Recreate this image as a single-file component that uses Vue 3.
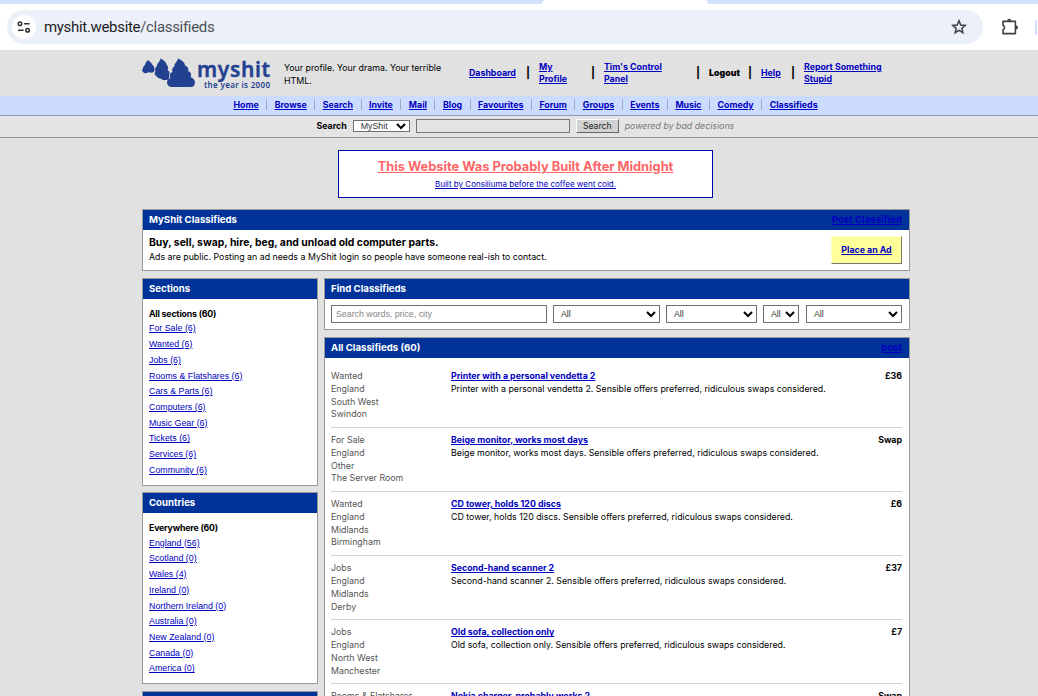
<template>
  <div class="window">
    <!-- Browser bar -->
    <div class="tab-strip"><div class="active-tab"></div></div>
    <div class="toolbar">
      <div class="omnibox">
        <span class="site-info">
          <svg width="14" height="12" viewBox="0 0 14 12" fill="none" stroke="#303236" stroke-width="1.5">
            <circle cx="3" cy="2.7" r="1.8" />
            <path d="M7 2.7h5.6M1 9.2h5.6" />
            <circle cx="10.6" cy="9.2" r="1.8" />
          </svg>
        </span>
        <span class="url">myshit.website<span class="path">/classifieds</span></span>
        <svg class="star" width="16" height="16" viewBox="0 0 16 16" fill="none" stroke="#3c4043" stroke-width="1.5">
          <path d="M8 1.8l1.75 4.2 4.5.4-3.4 2.95 1 4.4L8 11.4l-3.85 2.35 1-4.4L1.75 6.4l4.5-.4z" />
        </svg>
      </div>
      <svg class="puzzle" width="18" height="18" viewBox="0 0 18 18" fill="none" stroke="#3c4043" stroke-width="1.6">
        <path d="M2 3.4h12.4v12.2H2v-3.8a2.5 2.5 0 0 0 0-4.6z" stroke-linejoin="round" />
        <path d="M6.2 2.8a2 2 0 0 1 4 0zM15 7.6a2 2 0 0 1 0 4z" fill="#3c4043" stroke="none" />
      </svg>
      <span class="toolbar-divider"></span>
    </div>

    <!-- Site header -->
    <header class="site-header">
      <div class="wrap header-row">
        <svg class="logo" width="130" height="38" viewBox="0 0 130 38">
          <g fill="#234191">
            <path d="M6 5c2 2 4 3 4.500 5 1.500 1 2 2 1.500 3.500 1.500 1 0 3.500-1.500 4-2 .5-3-.5-4.500 0-2 1.500-4 .5-5-.5-1.500-1-1-2.500 0-3.500 0-2 1-3 2-3.500 0-2 1.500-3 3-5z" />
            <path d="M18.500 3.500c3 1.500 6 4 6 6 2 2 2 4 1 5.500 2.500 1.500 2.500 3.500 1.500 5 1 3-1 5.500-3.500 5-2 .5-4-.5-5-1.500-2 0-3.500-1-4-2.500-2-.5-2.500-3-1-4.500-1-2.500 0-4.500 1.500-5.500 0-3 3-4 3.500-7.500z" />
            <path d="M36 3.500c3.500 1.500 7 4 7 7 3 1 4 3.500 3 5.500 3 1 4 4 2.500 6 3 1 4.500 3.500 4.500 5.500 0 3-2 4.500-4.500 4.500H30c-3 0-5-2-5-4.500s1.500-4 3.500-4.500c-1.500-3 0-5.500 2-6-1-3 0-4.500 2-6-.5-3 3-4 3.500-7.500z" />
          </g>
          <text x="55" y="21.500" class="logo-name" textLength="73">myshit</text>
          <text x="62" y="33" class="logo-tag" textLength="66">the year is 2000</text>
        </svg>
        <div class="tagline">Your profile. Your drama. Your terrible HTML.</div>
        <nav class="account">
          <a class="dash">Dashboard</a><i>|</i>
          <a class="prof">My Profile</a><i>|</i>
          <a class="control">Tim's Control Panel</a><i>|</i>
          <b class="logout">Logout</b><i>|</i>
          <a class="help">Help</a><i>|</i>
          <a class="report">Report Something Stupid</a>
        </nav>
      </div>
    </header>

    <nav class="main-nav">
      <span v-for="item in navItems" :key="item" class="nav-item"><a>{{ item }}</a></span>
    </nav>

    <div class="search-bar">
      <b>Search</b>
      <span class="select search-select">MyShit<svg class="chev" viewBox="0 0 10 7"><path d="M1 1l4 4 4-4" /></svg></span>
      <span class="search-input"></span>
      <button class="search-btn">Search</button>
      <em>powered by bad decisions</em>
    </div>

    <!-- Page -->
    <main class="wrap page">
      <div class="banner">
        <a class="banner-title">This Website Was Probably Built After Midnight</a>
        <a class="banner-sub">Built by Consiliuma before the coffee went cold.</a>
      </div>

      <section class="panel intro">
        <h2>MyShit Classifieds <a>Post Classified</a></h2>
        <div class="intro-body">
          <div>
            <h3>Buy, sell, swap, hire, beg, and unload old computer parts.</h3>
            <p>Ads are public. Posting an ad needs a MyShit login so people have someone real-ish to contact.</p>
          </div>
          <a class="place-ad">Place an Ad</a>
        </div>
      </section>

      <div class="columns">
        <aside>
          <section class="panel side-panel" v-for="box in sideBoxes" :key="box.title">
            <h2>{{ box.title }}</h2>
            <ul>
              <li class="current">{{ box.current }}</li>
              <li v-for="link in box.links" :key="link"><a>{{ link }}</a></li>
            </ul>
          </section>
        </aside>

        <div class="content">
          <section class="panel find">
            <h2>Find Classifieds</h2>
            <div class="filters">
              <span class="text-input">Search words, price, city</span>
              <span v-for="n in 4" :key="n" class="select">All<svg class="chev" viewBox="0 0 10 7"><path d="M1 1l4 4 4-4" /></svg></span>
            </div>
          </section>

          <section class="panel listing">
            <h2>All Classifieds (60) <a>post</a></h2>
            <div class="ads">
              <article v-for="(ad, index) in ads" :key="index" class="ad">
                <div class="meta"><div v-for="line in ad.meta" :key="line">{{ line }}</div></div>
                <div class="text">
                  <a>{{ ad.title }}</a>
                  <p>{{ ad.title }}. Sensible offers preferred, ridiculous swaps considered.</p>
                </div>
                <b class="price">{{ ad.price }}</b>
              </article>
            </div>
          </section>
        </div>
      </div>
    </main>
  </div>
</template>

<script setup>
const navItems = [
  'Home', 'Browse', 'Search', 'Invite', 'Mail', 'Blog', 'Favourites',
  'Forum', 'Groups', 'Events', 'Music', 'Comedy', 'Classifieds'
]

const sideBoxes = [
  {
    title: 'Sections',
    current: 'All sections (60)',
    links: [
      'For Sale (6)', 'Wanted (6)', 'Jobs (6)', 'Rooms & Flatshares (6)', 'Cars & Parts (6)',
      'Computers (6)', 'Music Gear (6)', 'Tickets (6)', 'Services (6)', 'Community (6)'
    ]
  },
  {
    title: 'Countries',
    current: 'Everywhere (60)',
    links: [
      'England (56)', 'Scotland (0)', 'Wales (4)', 'Ireland (0)', 'Northern Ireland (0)',
      'Australia (0)', 'New Zealand (0)', 'Canada (0)', 'America (0)'
    ]
  },
  { title: '', current: '', links: [] }
]

const ads = [
  { title: 'Printer with a personal vendetta 2', price: '£36', meta: ['Wanted', 'England', 'South West', 'Swindon'] },
  { title: 'Beige monitor, works most days', price: 'Swap', meta: ['For Sale', 'England', 'Other', 'The Server Room'] },
  { title: 'CD tower, holds 120 discs', price: '£6', meta: ['Wanted', 'England', 'Midlands', 'Birmingham'] },
  { title: 'Second-hand scanner 2', price: '£37', meta: ['Jobs', 'England', 'Midlands', 'Derby'] },
  { title: 'Old sofa, collection only', price: '£7', meta: ['Jobs', 'England', 'North West', 'Manchester'] },
  { title: 'Nokia charger, probably works 2', price: 'Swap', meta: ['Rooms & Flatshares'] }
]
</script>

<style>
body {
  margin: 0;
  overflow: hidden;
}
</style>

<style scoped>
* {
  box-sizing: border-box;
}

.window {
  height: 696px;
  overflow: hidden;
  background: #e1e1e1;
  color: #000;
  font-family: Inter, "Liberation Sans", sans-serif;
  font-size: 8.81px;
  line-height: 12.75px;
}

a {
  color: #0000c0;
  text-decoration: underline;
}

h2, h3, p, ul {
  margin: 0;
  padding: 0;
}

.tab-strip {
  height: 4px;
  background: #d3e3fd;
}

.active-tab {
  width: 166px;
  height: 4px;
  margin-left: 542px;
  background: #fff;
  border-radius: 4px 4px 0 0;
}

.toolbar {
  height: 46px;
  background: #fff;
  display: flex;
  align-items: center;
  padding-left: 7px;
}

.omnibox {
  width: 976px;
  height: 34px;
  border-radius: 17px;
  background: #ebf0f9;
  display: flex;
  align-items: center;
  padding: 0 16px 0 5px;
}

.site-info {
  width: 24px;
  height: 24px;
  border-radius: 50%;
  background: #fff;
  display: flex;
  align-items: center;
  justify-content: center;
  margin-right: 8px;
}

.url {
  font-family: Roboto, Inter, sans-serif;
  font-size: 15px;
  line-height: 20px;
  letter-spacing: -0.32px;
  color: #1f1f1f;
}

.path {
  color: #4d5156;
}

.star {
  margin-left: auto;
}

.puzzle {
  margin-left: 18px;
}

.toolbar-divider {
  width: 2px;
  height: 15px;
  margin-left: 16px;
  background: #d3e3fd;
}

.wrap {
  width: 768px;
  margin: 0 auto 0 142px;
}

.site-header {
  height: 46px;
}

.header-row {
  display: flex;
  align-items: center;
  height: 46px;
}

.logo {
  margin-top: 1px;
}

.logo-name {
  font-family: "Noto Sans", sans-serif;
  font-size: 21px;
  font-weight: 600;
  fill: #234191;
  stroke: #234191;
  stroke-width: 0.4;
}

.logo-tag {
  font-family: "Noto Sans", sans-serif;
  font-size: 8px;
  font-weight: 600;
  fill: #234191;
}

.tagline {
  width: 165px;
  margin-left: 12px;
  margin-top: 3px;
}

.account {
  display: flex;
  align-items: center;
  margin-left: 20px;
  font-weight: 700;
  line-height: 12px;
}

.account i {
  width: 22px;
  font-style: normal;
  font-size: 11px;
  text-align: center;
}

.dash {
  width: 48px;
}

.prof {
  width: 43px;
}

.control {
  width: 83px;
}

.logout {
  width: 30px;
}

.help {
  width: 21px;
}

.report {
  width: 90px;
}

.main-nav {
  height: 20px;
  background: #ccdcff;
  border-bottom: 1px solid #8f9bb8;
  display: flex;
  justify-content: center;
  align-items: center;
  padding-left: 13px;
  padding-bottom: 2px;
}

.nav-item {
  font-weight: 700;
  padding: 0 7.5px;
  line-height: 11px;
}

.nav-item + .nav-item {
  border-left: 1px solid #a4a9b5;
}

.search-bar {
  height: 22px;
  border-bottom: 1px solid #999;
  background: #e4e4e4;
  display: flex;
  align-items: center;
  padding-left: 316.5px;
  padding-bottom: 1px;
}

.select {
  display: flex;
  align-items: center;
  justify-content: space-between;
  background: #fff;
  border: 1px solid #6f6f6f;
  color: #333;
  padding: 0 3px 0 7px;
  font-family: "Liberation Sans", sans-serif;
}

.chev {
  width: 10px;
  height: 7px;
  fill: none;
  stroke: #000;
  stroke-width: 2;
}

.search-select {
  width: 57px;
  height: 12px;
  margin-left: 6px;
}

.search-input {
  width: 154px;
  height: 14px;
  margin-left: 6px;
  border: 1px solid #767676;
}

.search-btn {
  width: 43px;
  height: 14px;
  margin-left: 6px;
  padding: 0;
  border: 1px solid;
  border-color: #fff #666 #666 #fff;
  background: #d2d2d2;
  font: 8.6px/11px Inter, sans-serif;
  color: #222;
}

.search-bar em {
  margin-left: 6px;
  color: #777;
}

.banner {
  width: 375px;
  height: 48px;
  margin: 12px 0 11px 196px;
  border: 1px solid #0000a8;
  background: #fff;
  display: flex;
  flex-direction: column;
  align-items: center;
}

.banner-title {
  margin-top: 8px;
  color: #f66;
  font-size: 12.83px;
  font-weight: 700;
  line-height: 16px;
}

.banner-sub {
  margin-top: 3px;
  font-size: 8.02px;
  line-height: 12px;
}

.panel {
  border: 1px solid #999;
  background: #fff;
}

.panel h2 {
  height: 20px;
  padding: 0 7px 0 6px;
  background: #039;
  color: #fff;
  font-size: 9.65px;
  font-weight: 700;
  line-height: 19px;
  display: flex;
  justify-content: space-between;
}

.intro {
  height: 62px;
}

.intro-body {
  display: flex;
  justify-content: space-between;
  padding: 6px 7px 6px 6px;
}

.intro h3 {
  font-size: 10.4px;
  font-weight: 700;
  line-height: 13px;
}

.intro p {
  margin-top: 2px;
}

.place-ad {
  width: 71px;
  height: 28px;
  border: 1px solid;
  border-color: #ffffd0 #777 #777 #ffffd0;
  background: #ff9;
  font-weight: 700;
  line-height: 26px;
  text-align: center;
}

.columns {
  display: flex;
  align-items: flex-start;
  gap: 6px;
  margin-top: 7px;
}

aside {
  width: 176px;
}

.side-panel {
  margin-bottom: 6.5px;
}

.side-panel ul {
  list-style: none;
  padding: 6.6px 6px 6.1px;
  font-family: "Liberation Sans", sans-serif;
  font-size: 8.85px;
}

.side-panel li {
  height: 15.74px;
  line-height: 15.74px;
}

.side-panel .current {
  font-family: Inter, sans-serif;
  font-size: 8.81px;
  font-weight: 700;
  letter-spacing: -0.2px;
}

.content {
  width: 586px;
}

.filters {
  display: grid;
  grid-template-columns: 216px 107px 91px 36px 96px;
  column-gap: 6px;
  height: 30px;
  padding: 6px 6px;
}

.filters .select:last-child {
  margin: 0 -1px 0 1px;
}

.text-input {
  border: 1px solid #6f6f6f;
  padding-left: 4px;
  color: #858585;
  font-family: "Liberation Sans", sans-serif;
  line-height: 16px;
}

.listing {
  margin-top: 7px;
}

.ads {
  padding: 6px 7px 6px 6px;
}

.ad {
  display: grid;
  grid-template-columns: 120px 1fr 60px;
  padding: 6px 0 6.1px;
  border-bottom: 1px solid #d2d2d2;
}

.meta {
  color: #555;
}

.text a {
  display: block;
  font-weight: 700;
}

.price {
  text-align: right;
}
</style>
